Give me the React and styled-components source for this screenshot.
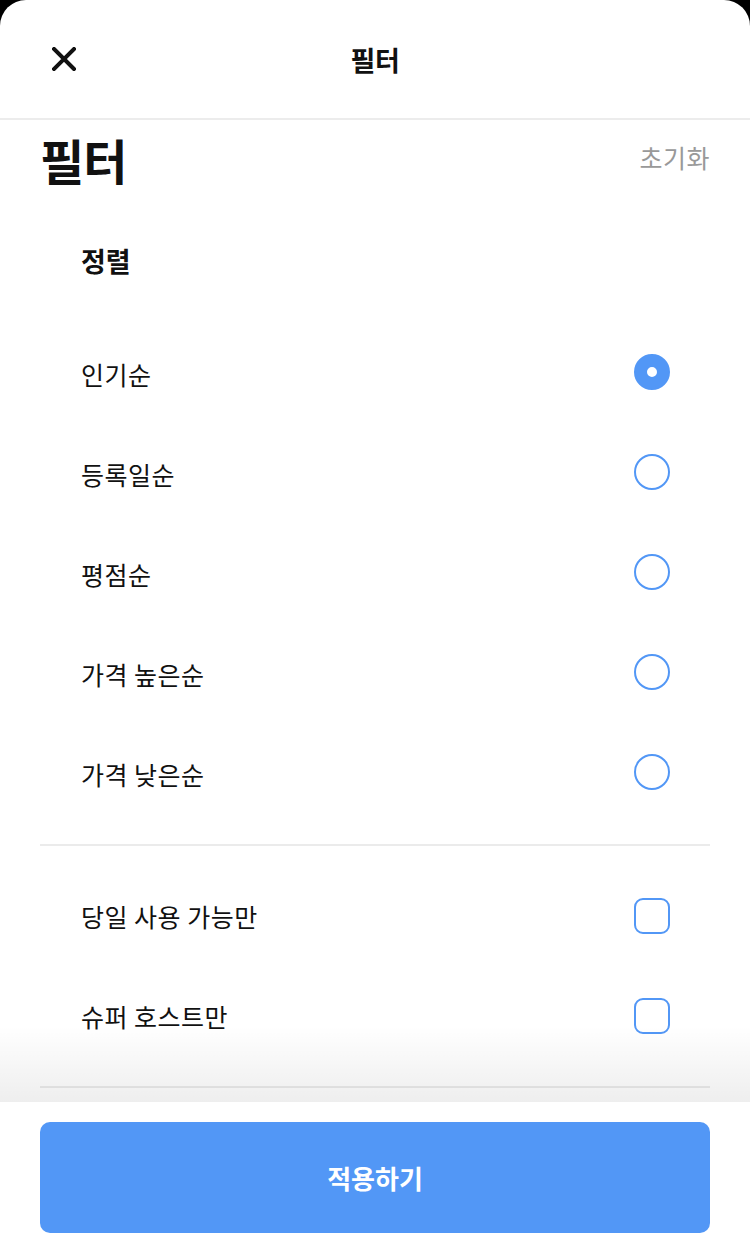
import React, { useState } from 'react';
import styled, { createGlobalStyle } from 'styled-components';

const GlobalStyle = createGlobalStyle`
  html, body {
    margin: 0;
    padding: 0;
    background: #000000;
  }
  * {
    box-sizing: border-box;
  }
  body {
    font-family: "Noto Sans CJK KR", "Noto Sans", sans-serif;
    color: #111111;
  }
`;

const Sheet = styled.div`
  width: 750px;
  height: 1254px;
  background: #ffffff;
  border-radius: 26px 26px 0 0;
  display: flex;
  flex-direction: column;
  overflow: hidden;
`;

const TopBar = styled.header`
  position: relative;
  height: 120px;
  flex-shrink: 0;
  display: flex;
  align-items: center;
  justify-content: center;
  border-bottom: 2px solid #ececec;
`;

const CloseButton = styled.button`
  position: absolute;
  left: 40px;
  top: 50%;
  transform: translateY(-50%);
  width: 48px;
  height: 48px;
  padding: 0;
  border: none;
  background: none;
  display: flex;
  align-items: center;
  justify-content: center;
  cursor: pointer;
`;

const TopTitle = styled.h1`
  margin: 0;
  font-size: 27px;
  font-weight: 700;
  letter-spacing: -0.3px;
`;

const Body = styled.main`
  flex: 1;
  overflow: hidden;
  position: relative;
  padding: 0 40px;
`;

const TitleRow = styled.div`
  height: 78px;
  display: flex;
  align-items: center;
  justify-content: space-between;
`;

const BigTitle = styled.h2`
  margin: 0;
  font-size: 48px;
  font-weight: 700;
  letter-spacing: -1px;
`;

const ResetButton = styled.button`
  border: none;
  background: none;
  padding: 0;
  margin-top: -4px;
  font-family: inherit;
  font-size: 25px;
  letter-spacing: 0.5px;
  color: #999999;
  cursor: pointer;
`;

const SectionHeading = styled.h3`
  margin: 0;
  height: 126px;
  display: flex;
  align-items: center;
  padding: 0 41px 2px;
  font-size: 27px;
  font-weight: 700;
`;

const OptionRow = styled.label`
  height: 100px;
  display: flex;
  align-items: center;
  justify-content: space-between;
  padding: 0 40px 0 41px;
  font-size: 25px;
  letter-spacing: 0.5px;
  cursor: pointer;
`;

const Radio = styled.span`
  width: 36px;
  height: 36px;
  border-radius: 50%;
  margin-top: -4px;
  border: ${({ $on }) => ($on ? '13px' : '2px')} solid #5297f6;
  background: #ffffff;
`;

const Checkbox = styled.span`
  width: 36px;
  height: 36px;
  border-radius: 9px;
  border: 2px solid #5297f6;
  background: ${({ $on }) => ($on ? '#5297f6' : '#ffffff')};
`;

const Divider = styled.hr`
  margin: 20px 0;
  border: none;
  height: 2px;
  background: #ebebeb;
`;

const Footer = styled.footer`
  position: relative;
  flex-shrink: 0;
  padding: 20px 40px 21px;
  background: #ffffff;

  &::before {
    content: '';
    position: absolute;
    left: 0;
    right: 0;
    bottom: 100%;
    height: 76px;
    background: linear-gradient(to bottom, rgba(0, 0, 0, 0), rgba(0, 0, 0, 0.065));
    pointer-events: none;
  }
`;

const ApplyButton = styled.button`
  width: 100%;
  height: 111px;
  border: none;
  border-radius: 10px;
  background: #5297f6;
  color: #ffffff;
  font-family: inherit;
  font-size: 26px;
  font-weight: 700;
  cursor: pointer;
`;

const sorts = ['인기순', '등록일순', '평점순', '가격 높은순', '가격 낮은순'];
const toggles = ['당일 사용 가능만', '슈퍼 호스트만'];

const App = () => {
  const [sort, setSort] = useState(0);
  const [checked, setChecked] = useState({});

  return (
    <>
      <GlobalStyle />
      <Sheet>
        <TopBar>
          <CloseButton aria-label="닫기">
            <svg width="24" height="24" viewBox="0 0 24 24">
              <path d="M2 2 L22 22 M22 2 L2 22" stroke="#111" strokeWidth="4" strokeLinecap="square" />
            </svg>
          </CloseButton>
          <TopTitle>필터</TopTitle>
        </TopBar>

        <Body>
          <TitleRow>
            <BigTitle>필터</BigTitle>
            <ResetButton onClick={() => { setSort(0); setChecked({}); }}>초기화</ResetButton>
          </TitleRow>

          <SectionHeading>정렬</SectionHeading>
          {sorts.map((s, i) => (
            <OptionRow key={s} onClick={() => setSort(i)}>
              {s}
              <Radio $on={sort === i} />
            </OptionRow>
          ))}

          <Divider />

          {toggles.map((t) => (
            <OptionRow key={t} onClick={() => setChecked((c) => ({ ...c, [t]: !c[t] }))}>
              {t}
              <Checkbox $on={!!checked[t]} />
            </OptionRow>
          ))}

          <Divider />
        </Body>

        <Footer>
          <ApplyButton>적용하기</ApplyButton>
        </Footer>
      </Sheet>
    </>
  );
};

export default App;
